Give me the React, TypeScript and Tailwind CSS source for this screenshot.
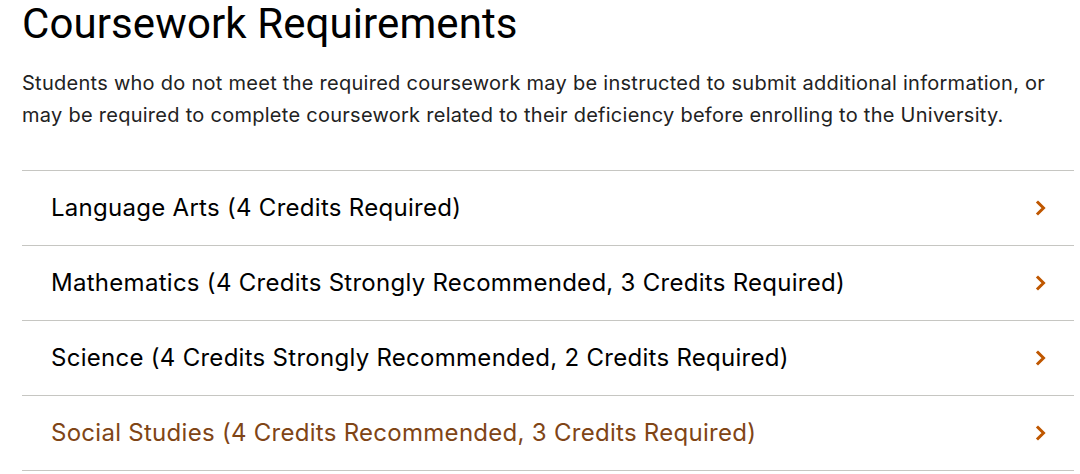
const ROWS = [
  { label: "Language Arts (4 Credits Required)", active: false },
  { label: "Mathematics (4 Credits Strongly Recommended, 3 Credits Required)", active: false },
  { label: "Science (4 Credits Strongly Recommended, 2 Credits Required)", active: false },
  { label: "Social Studies (4 Credits Recommended, 3 Credits Required)", active: true },
];

function Chevron() {
  return (
    <svg width="12" height="16" viewBox="0 0 12 16" fill="none">
      <polyline
        points="3,2.5 8.5,8 3,13.5"
        stroke="#bf5700"
        strokeWidth="3"
        strokeLinecap="square"
        strokeLinejoin="miter"
      />
    </svg>
  );
}

export default function App() {
  return (
    <div className="bg-white w-[1080px] h-[474px] overflow-hidden pl-[22px] pr-[6px] font-['Inter',sans-serif] text-[#000]">
      <h1 className="font-['Roboto',sans-serif] text-[42px] leading-[48px] font-normal tracking-[0.1px]">
        Coursework Requirements
      </h1>
      <p className="mt-[19px] text-[20px] leading-[32px] tracking-[0.27px] text-[#222] whitespace-nowrap">
        Students who do not meet the required coursework may be instructed to submit additional information, or
        <br />
        may be required to complete coursework related to their deficiency before enrolling to the University.
      </p>
      <div className="mt-[39px] border-t border-[#c6c6c2]">
        {ROWS.map((r) => (
          <div
            key={r.label}
            className="flex items-center justify-between h-[75px] border-b border-[#c6c6c2] pl-[29px] pr-[27px]"
          >
            <span className={`text-[24px] tracking-[0.28px] ${r.active ? "text-[#7f4516]" : "text-black"}`}>
              {r.label}
            </span>
            <Chevron />
          </div>
        ))}
      </div>
    </div>
  );
}
